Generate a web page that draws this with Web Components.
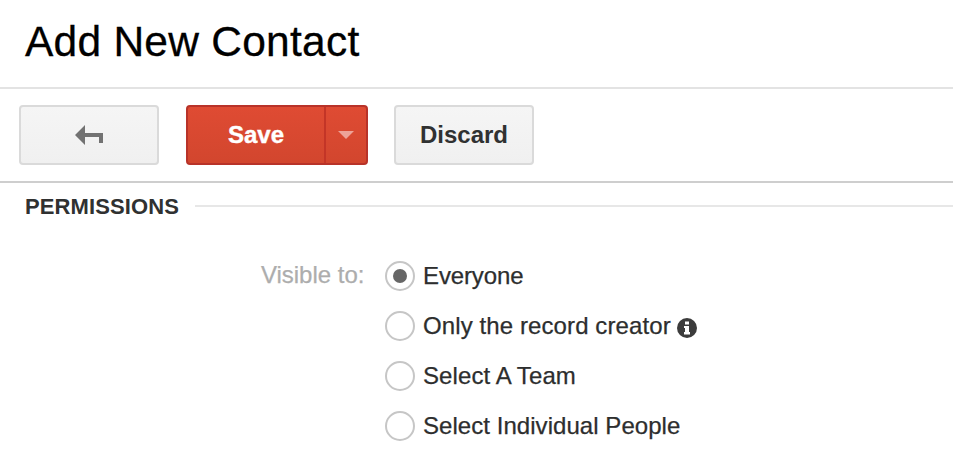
<!DOCTYPE html>
<html lang="en">
<head>
<meta charset="utf-8">
<title>Add New Contact</title>
<style>
html,body{margin:0;background:#fff}
body{width:953px;height:473px;overflow:hidden;font-family:"Liberation Sans",Arial,sans-serif;color:#2d2e2e}
</style>
</head>
<body>
<contact-page></contact-page>
<script>
function define(name, html) {
  const t = document.createElement('template');
  t.innerHTML = html;
  customElements.define(name, class extends HTMLElement {
    constructor() {
      super();
      this.attachShadow({mode: 'open'}).append(t.content.cloneNode(true));
    }
  });
}

define('page-title', `<style>
:host{display:block;box-sizing:border-box;height:89px;padding:18px 0 0 25px;border-bottom:2px solid #e3e3e3;color:#000}
h1{margin:0;font-size:42.5px;line-height:48px;font-weight:400;letter-spacing:.25px;white-space:nowrap;-webkit-text-stroke:.3px currentColor}
</style><h1><slot></slot></h1>`);

define('push-button', `<style>
:host{display:block;width:140px;height:60px}
button{box-sizing:border-box;width:100%;height:100%;display:flex;align-items:center;justify-content:center;padding:0;margin:0;border:2px solid #dadada;border-radius:4px;background:linear-gradient(#f5f5f5,#f0f0f0);font:700 24px/28px "Liberation Sans",Arial,sans-serif;color:#303131}
</style><button type="button"><slot></slot></button>`);

define('back-icon', `<style>
:host{display:block;width:28px;height:20px}
svg{display:block}
</style><svg width="28" height="20" viewBox="0 0 28 20"><path d="M0 10 10 0V8H28V18H24V12H10V20Z" fill="#727272"/></svg>`);

define('save-button', `<style>
:host{display:flex;box-sizing:border-box;width:182px;height:60px;border:2px solid #b83329;border-radius:4px;background:linear-gradient(#df4b33,#d2462e);overflow:hidden}
button{border:0;margin:0;padding:0;background:none;display:flex;align-items:center;justify-content:center;font:700 24px/28px "Liberation Sans",Arial,sans-serif;color:#fff;-webkit-text-stroke:.4px #fff}
.main{flex:1}
.more{box-sizing:border-box;width:42px;border-left:2px solid #c33527}
svg{display:block}
</style><button class="main" type="button"><slot></slot></button>
<button class="more" type="button" aria-label="More save options"><svg width="16" height="8" viewBox="0 0 16 8"><path d="M0 0H16L8 8Z" fill="#eda398"/></svg></button>`);

define('tool-bar', `<style>
:host{display:flex;box-sizing:border-box;height:94px;padding:16px 0 0 19px;border-bottom:2px solid #cecece}
::slotted(save-button){margin:0 26px 0 27px}
</style><slot></slot>`);

define('section-heading', `<style>
:host{display:flex;align-items:center;height:46px;gap:16px;padding-left:25px}
h2{margin:0;font-size:22px;line-height:26px;font-weight:700;letter-spacing:.1px;padding-top:2px;color:#303131}
i{flex:1;height:2px;background:#e7e7e7}
</style><h2><slot></slot></h2><i></i>`);

define('radio-option', `<style>
:host{display:flex;align-items:center;height:50px;font-size:24px;line-height:28px;white-space:nowrap}
.ring{box-sizing:border-box;width:30px;height:30px;border:2px solid #c6c6c6;border-radius:50%;display:flex;align-items:center;justify-content:center;margin-right:8px}
:host([checked]) .ring::after{content:"";width:14px;height:14px;border-radius:50%;background:#666}
.label{-webkit-text-stroke:.25px currentColor}
</style><span class="ring"></span><span class="label"><slot></slot></span><slot name="hint"></slot>`);

define('info-icon', `<style>
:host{display:block;width:20px;height:20px;margin:3px 0 0 6px}
svg{display:block}
</style><svg width="20" height="20" viewBox="0 0 20 20"><circle cx="10" cy="10" r="10" fill="#3c3c3c"/><path d="M8 3.5H12V6.5H8ZM7 8H12V14H13V16.5H7V14H8V10H7Z" fill="#fff"/></svg>`);

define('form-row', `<style>
:host{display:flex;padding-top:22px}
.name{box-sizing:border-box;width:384.5px;padding-right:20px;text-align:right;font-size:24px;line-height:48px;color:#adadad;-webkit-text-stroke:.25px currentColor}
.options{display:flex;flex-direction:column;margin-left:.5px}
</style><span class="name"><slot name="label"></slot></span><div class="options"><slot></slot></div>`);

define('contact-page', `<style>:host{display:block}</style>
<page-title>Add New Contact</page-title>
<tool-bar>
<push-button aria-label="Back"><back-icon></back-icon></push-button>
<save-button>Save</save-button>
<push-button>Discard</push-button>
</tool-bar>
<section-heading>PERMISSIONS</section-heading>
<form-row>
<span slot="label">Visible to:</span>
<radio-option checked style="letter-spacing:-.12px">Everyone</radio-option>
<radio-option style="letter-spacing:.1px">Only the record creator<info-icon slot="hint"></info-icon></radio-option>
<radio-option style="letter-spacing:.1px">Select A Team</radio-option>
<radio-option style="letter-spacing:.05px">Select Individual People</radio-option>
</form-row>`);
</script>
</body>
</html>
